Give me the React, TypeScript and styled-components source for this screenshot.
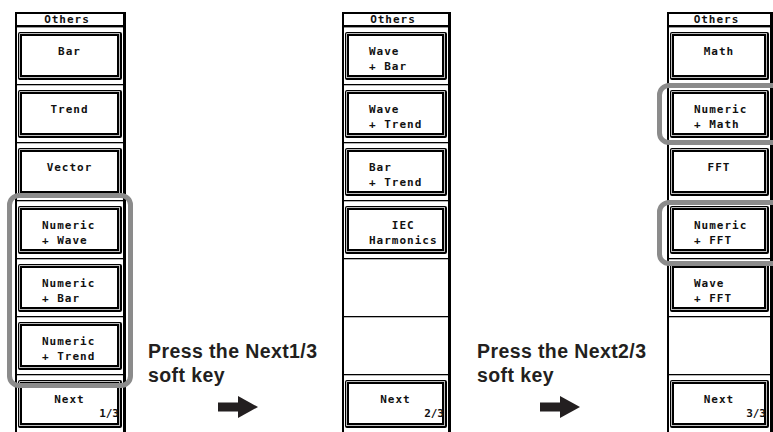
import React from 'react';
import styled, { createGlobalStyle } from 'styled-components';

const Global = createGlobalStyle`
  html, body { margin: 0; padding: 0; background: #fff; overflow: hidden; }
  #root { width: 773px; height: 432px; }
`;

const Page = styled.div`
  display: flex;
  align-items: flex-start;
  width: 773px;
  height: 432px;
  overflow: hidden;
  box-sizing: border-box;
  padding: 12px 0 0 15px;
  background: #fff;
`;

const Panel = styled.div<{ $w: number }>`
  position: relative;
  flex: none;
  width: ${(p) => p.$w}px;
  box-sizing: border-box;
  display: flex;
  flex-direction: column;
  border-left: 2px solid #000;
  border-right: 3px solid #000;
`;

const Header = styled.div`
  height: 15px;
  box-sizing: border-box;
  border-top: 2px solid #000;
  border-bottom: 2px solid #000;
  box-shadow: 0 1px 0 #9a9a9a;
  display: flex;
  justify-content: center;
  align-items: flex-start;
  font-family: "DejaVu Sans Mono", monospace;
  font-weight: bold;
  font-size: 11px;
  line-height: 12px;
  letter-spacing: 1px;
  color: #111;
  padding-right: 6px;
`;

const Slot = styled.div`
  height: 58px;
  flex: none;
  box-sizing: border-box;
  border-bottom: 1px solid #000;
  box-shadow: 0 1px 0 #b5b5b5;
  padding: 5px 1px 4px 1px;
  display: flex;
`;

const Key = styled.div<{ $align: 'center' | 'left' }>`
  flex: 1;
  box-sizing: border-box;
  border: 1px solid #000;
  border-right-width: 2px;
  border-bottom-width: 2px;
  border-radius: 2px;
  box-shadow: inset 0 0 0 1px #bdbdbd, inset 0 0 0 3px #000;
  padding: 11px 0 0 ${(p) => (p.$align === 'left' ? '23px' : '0')};
  display: flex;
  flex-direction: column;
  align-items: ${(p) => (p.$align === 'left' ? 'flex-start' : 'center')};
  font-family: "DejaVu Sans Mono", monospace;
  font-weight: bold;
  font-size: 11px;
  line-height: 15px;
  letter-spacing: 1px;
  color: #111;
  white-space: pre;
`;

const Line = styled.div``;

const Fraction = styled.div`
  align-self: flex-end;
  line-height: 14px;
  letter-spacing: 0;
  padding-right: 1px;
`;

const Highlight = styled.div<{ $top: number; $left: number; $w: number; $h: number }>`
  position: absolute;
  top: ${(p) => p.$top}px;
  left: ${(p) => p.$left}px;
  width: ${(p) => p.$w}px;
  height: ${(p) => p.$h}px;
  box-sizing: border-box;
  border: 5px solid #8b8b8b;
  border-radius: 12px;
  pointer-events: none;
  z-index: 2;
`;

const Caption = styled.div<{ $ml: number; $w: number }>`
  flex: none;
  margin-left: ${(p) => p.$ml}px;
  width: ${(p) => p.$w}px;
  padding-top: 327px;
  font-family: "Liberation Sans", Arial, sans-serif;
  font-weight: bold;
  font-size: 19.5px;
  letter-spacing: 0.4px;
  line-height: 24px;
  color: #231f20;
  white-space: nowrap;
`;

const ArrowWrap = styled.div<{ $ml: number }>`
  margin: 9px 0 0 ${(p) => p.$ml}px;
  width: 40px;
  height: 22px;
`;

const Arrow = ({ ml }: { ml: number }) => (
  <ArrowWrap $ml={ml}>
    <svg width="40" height="22" viewBox="0 0 40 22">
      <rect x="0" y="6.5" width="21" height="9" fill="#231f20" />
      <polygon points="20,0 40,11 20,22" fill="#231f20" />
    </svg>
  </ArrowWrap>
);

type KeyDef =
  | null
  | { lines: string[]; align: 'center' | 'left'; frac?: string };

const SoftKeys = ({ keys }: { keys: KeyDef[] }) => (
  <>
    <Header>Others</Header>
    {keys.map((k, i) => (
      <Slot key={i}>
        {k && (
          <Key $align={k.align}>
            {k.lines.map((l, j) => (
              <Line key={j}>{l}</Line>
            ))}
            {k.frac && <Fraction>{k.frac}</Fraction>}
          </Key>
        )}
      </Slot>
    ))}
  </>
);

const panel1: KeyDef[] = [
  { lines: ['Bar'], align: 'center' },
  { lines: ['Trend'], align: 'center' },
  { lines: ['Vector'], align: 'center' },
  { lines: ['Numeric', '+ Wave'], align: 'left' },
  { lines: ['Numeric', '+ Bar'], align: 'left' },
  { lines: ['Numeric', '+ Trend'], align: 'left' },
  { lines: ['Next'], align: 'center', frac: '1/3' },
];

const panel2: KeyDef[] = [
  { lines: ['Wave', '+ Bar'], align: 'left' },
  { lines: ['Wave', '+ Trend'], align: 'left' },
  { lines: ['Bar', '+ Trend'], align: 'left' },
  { lines: ['   IEC', 'Harmonics'], align: 'left' },
  null,
  null,
  { lines: ['Next'], align: 'center', frac: '2/3' },
];

const panel3: KeyDef[] = [
  { lines: ['Math'], align: 'center' },
  { lines: ['Numeric', '+ Math'], align: 'left' },
  { lines: ['FFT'], align: 'center' },
  { lines: ['Numeric', '+ FFT'], align: 'left' },
  { lines: ['Wave', '+ FFT'], align: 'left' },
  null,
  { lines: ['Next'], align: 'center', frac: '3/3' },
];

export default function App() {
  return (
    <>
      <Global />
      <Page>
        <Panel $w={111}>
          <SoftKeys keys={panel1} />
          <Highlight $top={181} $left={-10} $w={126} $h={195} />
        </Panel>
        <Caption $ml={22} $w={194}>
          Press the Next1/3
          <br />
          soft key
          <Arrow ml={70} />
        </Caption>
        <Panel $w={109}>
          <SoftKeys keys={panel2} />
        </Panel>
        <Caption $ml={26} $w={190}>
          Press the Next2/3
          <br />
          soft key
          <Arrow ml={63} />
        </Caption>
        <Panel $w={106}>
          <SoftKeys keys={panel3} />
          <Highlight $top={71} $left={-12} $w={130} $h={62} />
          <Highlight $top={188} $left={-12} $w={130} $h={66} />
        </Panel>
      </Page>
    </>
  );
}
